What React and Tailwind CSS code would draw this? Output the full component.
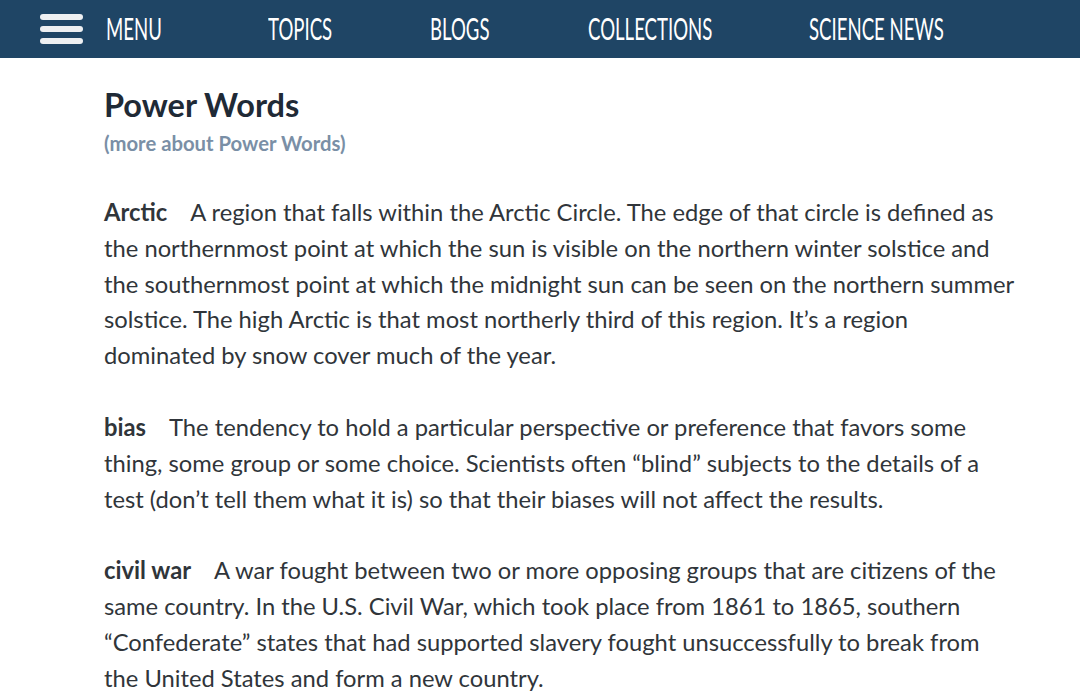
import React from 'react';

const navItems = [
  { label: 'TOPICS', w: 'w-[65px]' },
  { label: 'BLOGS', w: 'w-[61px]' },
  { label: 'COLLECTIONS', w: 'w-[124px]' },
  { label: 'SCIENCE NEWS', w: 'w-[136px]' },
];

const words = [
  {
    term: 'Arctic',
    def: 'A region that falls within the Arctic Circle. The edge of that circle is defined as the northernmost point at which the sun is visible on the northern winter solstice and the southernmost point at which the midnight sun can be seen on the northern summer solstice. The high Arctic is that most northerly third of this region. It’s a region dominated by snow cover much of the year.',
  },
  {
    term: 'bias',
    def: 'The tendency to hold a particular perspective or preference that favors some thing, some group or some choice. Scientists often “blind” subjects to the details of a test (don’t tell them what it is) so that their biases will not affect the results.',
  },
  {
    term: 'civil war',
    def: 'A war fought between two or more opposing groups that are citizens of the same country. In the U.S. Civil War, which took place from 1861 to 1865, southern “Confederate” states that had supported slavery fought unsuccessfully to break from the United States and form a new country.',
  },
];

function NavLabel({ children }) {
  return (
    <span className="inline-block whitespace-nowrap origin-left scale-x-[0.6] text-[31px] leading-none">
      {children}
    </span>
  );
}

export default function App() {
  return (
    <div className="min-h-screen bg-white" style={{ fontFamily: 'Lato, "Open Sans", sans-serif' }}>
      {/* top nav */}
      <nav className="h-[58px] bg-[#1f4565] flex items-center text-white overflow-hidden">
        <div className="flex items-center pl-[40px]">
          <div className="flex flex-col gap-[6px] w-[43px]">
            <span className="h-[6px] rounded-full bg-[#eef0f2]" />
            <span className="h-[6px] rounded-full bg-[#eef0f2]" />
            <span className="h-[6px] rounded-full bg-[#eef0f2]" />
          </div>
          <div className="ml-[23px] w-[54px]">
            <NavLabel>MENU</NavLabel>
          </div>
        </div>
        <ul className="flex items-center gap-[97px] ml-[108px]">
          {navItems.map((item) => (
            <li key={item.label} className={item.w}>
              <NavLabel>{item.label}</NavLabel>
            </li>
          ))}
        </ul>
      </nav>

      <main className="pl-[104px] pt-[27px] text-[#30353a]">
        <h1 className="text-[32.5px] font-bold text-[#1f2a36] leading-[40px]">Power Words</h1>
        <p className="text-[20.3px] font-bold text-[#7a8fa6] mt-[3px] leading-[31px]">(more about Power Words)</p>

        <div className="mt-[36px] flex flex-col gap-[36px] w-[914px]">
          {words.map((w) => (
            <p key={w.term} className="text-[23.75px] leading-[35.8px]">
              <b className="font-bold mr-[23px]">{w.term}</b>
              {w.def}
            </p>
          ))}
        </div>
      </main>
    </div>
  );
}
